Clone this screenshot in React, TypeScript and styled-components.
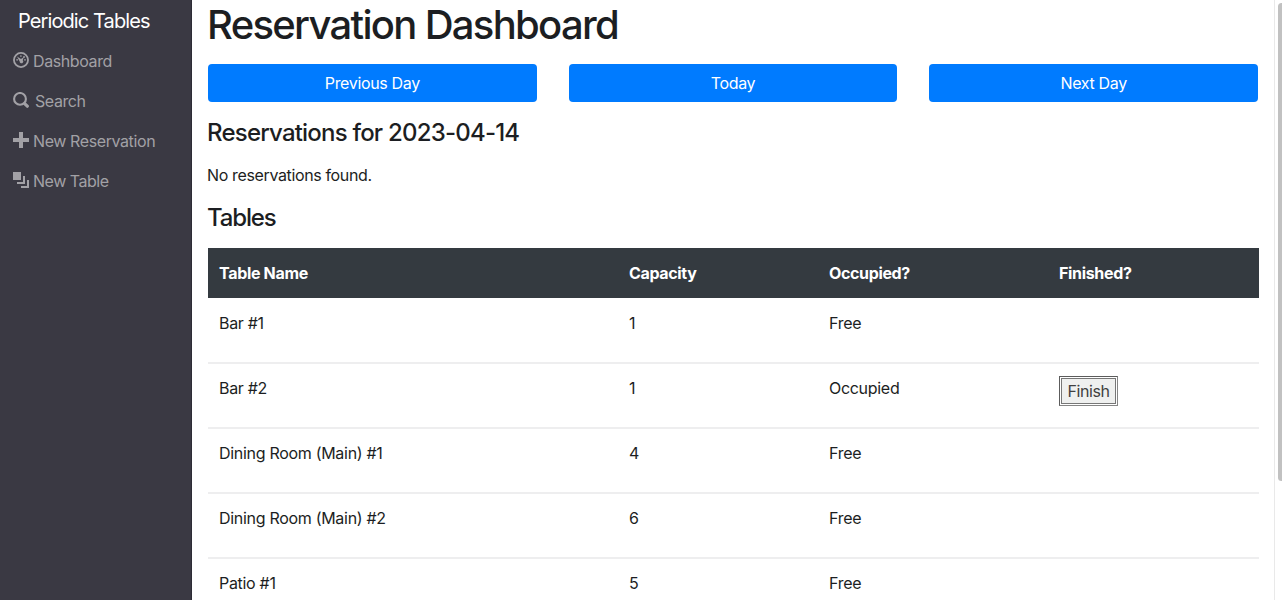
import React from "react";
import styled, { createGlobalStyle } from "styled-components";

const GlobalStyle = createGlobalStyle`
  * { box-sizing: border-box; }
  body {
    margin: 0;
    height: 600px;
    overflow: hidden;
    background: #fff;
    color: #1c1e22;
    font-family: Inter, "Liberation Sans", sans-serif;
    font-size: 16px;
    line-height: 24px;
  }
`;

const Page = styled.div`
  display: flex;
  height: 600px;
  overflow: hidden;
`;

const Sidebar = styled.nav`
  width: 192px;
  flex: none;
  background: #3a3943;
  border-right: 1px solid #2d2c35;
  display: flex;
  flex-direction: column;
`;

const Brand = styled.a`
  display: block;
  height: 41px;
  padding: 6px 0 0 18px;
  color: #fff;
  font-size: 20px;
  line-height: 30px;
  letter-spacing: -0.9px;
  white-space: nowrap;
`;

const NavLink = styled.a<{ $gap: number; $spacing: number }>`
  display: flex;
  align-items: center;
  gap: ${(p) => p.$gap}px;
  height: 40px;
  padding-left: 13px;
  color: #a2a1a6;
  letter-spacing: ${(p) => p.$spacing}px;
  white-space: nowrap;
  svg {
    flex: none;
    margin-top: -2px;
  }
`;

const Main = styled.main`
  flex: 1;
  min-width: 0;
  padding: 1px 16px 0;
`;

const Title = styled.h1`
  margin: 0 0 15px -1px;
  font-size: 40px;
  line-height: 48px;
  font-weight: 500;
  letter-spacing: -1.7px;
`;

const DayButtons = styled.div`
  display: grid;
  grid-template-columns: repeat(3, 1fr);
  gap: 32px;
  margin-bottom: 16px;
`;

const DayButton = styled.button`
  height: 38px;
  padding: 0 0 1px;
  border: 0;
  border-radius: 4px;
  background: #007bff;
  color: #fff;
  font: inherit;
  letter-spacing: -0.35px;
`;

const Heading = styled.h2<{ $spacing: number }>`
  margin: 0 0 0 -1px;
  font-size: 24px;
  line-height: 29px;
  font-weight: 500;
  letter-spacing: ${(p) => p.$spacing}px;
`;

const Message = styled.p`
  margin: 16px 0 16px -1px;
  letter-spacing: -0.36px;
`;

const Table = styled.table`
  width: 1051px;
  margin-top: 16px;
  table-layout: fixed;
  border-collapse: separate;
  border-spacing: 0;
`;

const HeadCell = styled.th<{ $width?: number; $spacing: number }>`
  width: ${(p) => (p.$width ? `${p.$width}px` : "auto")};
  height: 50px;
  padding: 0 11px;
  background: #343a40;
  color: #fff;
  text-align: left;
  font-weight: 700;
  letter-spacing: ${(p) => p.$spacing}px;
`;

const Row = styled.tr`
  &:not(:first-child) td {
    border-top: 2px solid #eeeeef;
    padding-top: 12px;
  }
  &:first-child td {
    height: 64px;
    padding-top: 13px;
  }
`;

const Cell = styled.td`
  height: 65px;
  padding: 0 11px;
  vertical-align: top;
  white-space: nowrap;
  letter-spacing: -0.3px;
`;

const FinishButton = styled.button`
  display: block;
  width: 59px;
  height: 30px;
  padding: 0;
  border: 1px solid;
  border-color: #5c5c5c #858585 #858585 #5c5c5c;
  outline: 1px solid #777;
  outline-offset: -3px;
  background: #eff0ef;
  box-shadow: inset 0 0 0 2px #fff;
  color: #404040;
  font: inherit;
  letter-spacing: -0.45px;
`;

const ScrollTrack = styled.div`
  width: 8px;
  flex: none;
  padding: 3px 0 0 3px;
  border-left: 1px solid #e9e9e9;
`;

const ScrollThumb = styled.div`
  width: 7px;
  height: 478px;
  border-radius: 4px;
  background: #c1c1c1;
`;

const DashboardIcon = () => (
  <svg width="16" height="16" viewBox="0 0 16 16" fill="none">
    <circle cx="8" cy="8" r="7.05" stroke="currentColor" strokeWidth="1.8" />
    <path d="M4 4.4 8 7 10.9 5 9.7 8.2A1.8 1.8 0 1 1 6.7 9.5Z" fill="currentColor" />
    <g fill="currentColor">
      <circle cx="7.9" cy="4" r=".85" />
      <circle cx="11" cy="5" r=".95" />
      <circle cx="12" cy="7.8" r=".85" />
      <circle cx="4.1" cy="7.8" r=".85" />
    </g>
  </svg>
);

const SearchIcon = () => (
  <svg width="17" height="16" viewBox="0 0 17 16" fill="none" stroke="currentColor">
    <circle cx="7" cy="6.9" r="5.9" strokeWidth="2.1" />
    <path d="m11.6 11.6 2.7 2.6" strokeWidth="3.2" strokeLinecap="round" />
  </svg>
);

const PlusIcon = () => (
  <svg width="16" height="16" viewBox="0 0 16 16" fill="currentColor">
    <path d="M6 0h4v6h6v4h-6v6H6v-6H0V6h6Z" />
  </svg>
);

const LayersIcon = () => (
  <svg width="16" height="16" viewBox="0 0 16 16" fill="currentColor">
    <path d="M0 0h8v8H0ZM10 4h2v8H4v-2h6ZM14 8h2v8H8v-2h6Z" />
  </svg>
);

const links = [
  { label: "Dashboard", icon: <DashboardIcon />, gap: 4, spacing: -0.4 },
  { label: "Search", icon: <SearchIcon />, gap: 5, spacing: -0.42 },
  { label: "New Reservation", icon: <PlusIcon />, gap: 4, spacing: -0.4 },
  { label: "New Table", icon: <LayersIcon />, gap: 4, spacing: -0.48 },
];

const tables = [
  { name: "Bar #1", capacity: 1, occupied: false },
  { name: "Bar #2", capacity: 1, occupied: true },
  { name: "Dining Room (Main) #1", capacity: 4, occupied: false },
  { name: "Dining Room (Main) #2", capacity: 6, occupied: false },
  { name: "Patio #1", capacity: 5, occupied: false },
];

export default function App() {
  return (
    <Page>
      <GlobalStyle />
      <Sidebar>
        <Brand>Periodic Tables</Brand>
        {links.map((l) => (
          <NavLink key={l.label} $gap={l.gap} $spacing={l.spacing}>
            {l.icon}
            <span>{l.label}</span>
          </NavLink>
        ))}
      </Sidebar>
      <Main>
        <Title>Reservation Dashboard</Title>
        <DayButtons>
          <DayButton>Previous Day</DayButton>
          <DayButton>Today</DayButton>
          <DayButton>Next Day</DayButton>
        </DayButtons>
        <Heading $spacing={-0.79}>Reservations for 2023-04-14</Heading>
        <Message>No reservations found.</Message>
        <Heading $spacing={-1.15}>Tables</Heading>
        <Table>
          <thead>
            <tr>
              <HeadCell $width={410} $spacing={-0.33}>Table Name</HeadCell>
              <HeadCell $width={200} $spacing={-0.35}>Capacity</HeadCell>
              <HeadCell $width={230} $spacing={-0.35}>Occupied?</HeadCell>
              <HeadCell $spacing={-0.33}>Finished?</HeadCell>
            </tr>
          </thead>
          <tbody>
            {tables.map((t) => (
              <Row key={t.name}>
                <Cell>{t.name}</Cell>
                <Cell>{t.capacity}</Cell>
                <Cell>{t.occupied ? "Occupied" : "Free"}</Cell>
                <Cell>{t.occupied && <FinishButton>Finish</FinishButton>}</Cell>
              </Row>
            ))}
          </tbody>
        </Table>
      </Main>
      <ScrollTrack>
        <ScrollThumb />
      </ScrollTrack>
    </Page>
  );
}
